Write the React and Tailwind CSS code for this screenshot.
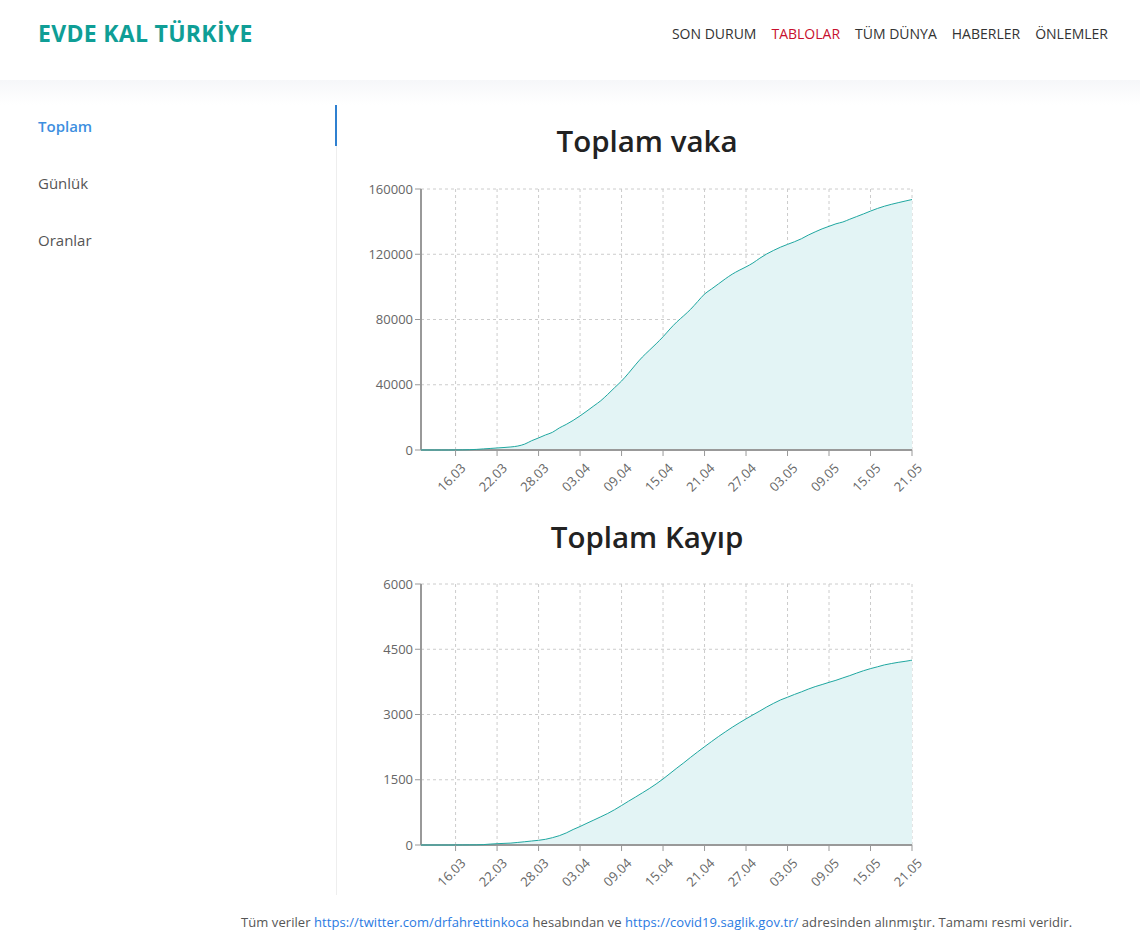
import React from 'react';

const FONT = { fontFamily: '"Open Sans", "Noto Sans", sans-serif' };

// cumulative values, one per day, ending at 21.05 (72 days from 11.03)
const CASES = [1, 5, 5, 6, 18, 47, 98, 191, 359, 670, 947, 1236, 1529, 1872, 2433, 3629, 5698, 7402, 9217, 10827, 13531, 15679, 18135, 20921, 23934, 27069, 30217, 34109, 38226, 42282, 47029, 52167, 56956, 61049, 65111, 69392, 74193, 78546, 82329, 86306, 90980, 95591, 98674, 101790, 104912, 107773, 110130, 112261, 114653, 117589, 120204, 122392, 124375, 126045, 127659, 129491, 131744, 133721, 135569, 137115, 138657, 139771, 141475, 143114, 144749, 146457, 148067, 149435, 150593, 151615, 152587, 153548];
const DEATHS = [0, 0, 0, 0, 0, 1, 2, 3, 4, 9, 21, 30, 37, 44, 59, 75, 92, 108, 131, 168, 214, 277, 356, 425, 501, 574, 649, 725, 812, 908, 1006, 1101, 1198, 1296, 1403, 1518, 1643, 1769, 1890, 2017, 2140, 2259, 2376, 2491, 2600, 2706, 2805, 2900, 2992, 3081, 3174, 3258, 3336, 3397, 3461, 3520, 3584, 3641, 3689, 3739, 3786, 3841, 3894, 3952, 4007, 4055, 4096, 4140, 4171, 4199, 4222, 4249];

const X_LABELS = ['16.03', '22.03', '28.03', '03.04', '09.04', '15.04', '21.04', '27.04', '03.05', '09.05', '15.05', '21.05'];
const DAYS = 72;

const L = 74, R = 565, T = 14, B = 275;

const smoothPath = (pts) => {
  let d = `M${pts[0][0]},${pts[0][1]}`;
  for (let i = 0; i < pts.length - 1; i++) {
    const p0 = pts[i - 1] || pts[i];
    const p1 = pts[i];
    const p2 = pts[i + 1];
    const p3 = pts[i + 2] || p2;
    const c1x = p1[0] + (p2[0] - p0[0]) / 6;
    const c1y = Math.min(B, p1[1] + (p2[1] - p0[1]) / 6);
    const c2x = p2[0] - (p3[0] - p1[0]) / 6;
    const c2y = Math.min(B, p2[1] - (p3[1] - p1[1]) / 6);
    d += ` C${c1x.toFixed(2)},${c1y.toFixed(2)} ${c2x.toFixed(2)},${c2y.toFixed(2)} ${p2[0].toFixed(2)},${p2[1].toFixed(2)}`;
  }
  return d;
};

const AreaChart = ({ data, max, ticks }) => {
  const vals = [...Array(Math.max(0, DAYS - data.length)).fill(0), ...data].slice(-DAYS);
  const n = vals.length;
  const px = (i) => L + (i / (n - 1)) * (R - L);
  const pts = vals.map((v, i) => [px(i), B - (v / max) * (B - T)]);
  const line = smoothPath(pts);
  const area = `${line} L${R},${B} L${L},${B} Z`;
  const xTicks = X_LABELS.map((lab, i) => ({ lab, x: px(5 + i * 6) }));
  return (
    <svg width="600" height="325" className="block" style={FONT}>
      {/* grid */}
      {ticks.map((t) => {
        const y = B - (t / max) * (B - T);
        return <line key={t} x1={L} x2={R} y1={y} y2={y} stroke="#ccc" strokeDasharray="3 3" />;
      })}
      {xTicks.map(({ x, lab }) => (
        <line key={lab} x1={x} x2={x} y1={T} y2={B} stroke="#ccc" strokeDasharray="3 3" />
      ))}
      <path d={area} fill="#e3f4f5" />
      {/* axes */}
      <line x1={L} x2={L} y1={T} y2={B} stroke="#999" strokeWidth="2" />
      <line x1={L} x2={R} y1={B} y2={B} stroke="#999" strokeWidth="2" />
      <path d={line} fill="none" stroke="#1fa7a0" strokeWidth="1" />
      {ticks.map((t) => {
        const y = B - (t / max) * (B - T);
        return (
          <g key={t}>
            <line x1={L - 6} x2={L} y1={y} y2={y} stroke="#999" />
            <text x={L - 8} y={y + 4.5} textAnchor="end" fontSize="13" fill="#666">{t}</text>
          </g>
        );
      })}
      {xTicks.map(({ x, lab }) => (
        <g key={lab}>
          <line x1={x} x2={x} y1={B} y2={B + 6} stroke="#999" />
          <text x={x + 11} y={B + 19} textAnchor="end" fontSize="13" fill="#666" transform={`rotate(-45 ${x + 11} ${B + 19})`}>{lab}</text>
        </g>
      ))}
    </svg>
  );
};

const NAV = ['SON DURUM', 'TABLOLAR', 'TÜM DÜNYA', 'HABERLER', 'ÖNLEMLER'];

export default function App() {
  return (
    <div className="w-[1140px] min-h-[947px] bg-white" style={FONT}>
      {/* Header */}
      <header className="h-[80px] flex items-start justify-between pt-[17px] pl-[38px] pr-[32px]">
        <h1 className="text-[23px] leading-[32px] font-bold text-[#0f9e96] tracking-[0.3px]">EVDE KAL TÜRKİYE</h1>
        <nav className="flex items-center gap-[15px] h-[32px] text-[14px] text-[#333]">
          {NAV.map((n) => (
            <span key={n} className={n === 'TABLOLAR' ? 'text-[#c8102e]' : ''}>{n}</span>
          ))}
        </nav>
      </header>
      <div className="h-[25px] bg-gradient-to-b from-[#f6f7f9] to-white" />

      <div className="flex">
        {/* Sidebar */}
        <aside className="w-[337px] border-r border-[#eee] h-[790px]">
          {['Toplam', 'Günlük', 'Oranlar'].map((item, i) => (
            <div
              key={item}
              className={`h-[41px] mb-[16px] flex items-center pl-[38px] pt-[1px] text-[15px] ${
                i === 0 ? 'font-semibold text-[#3d8fe0] border-r-2 border-[#2f80d0] -mr-px' : 'text-[#555]'
              }`}
            >
              {item}
            </div>
          ))}
        </aside>

        {/* Charts */}
        <main className="w-[620px] flex flex-col items-center pt-[16px]">
          <h2 className="text-[29.5px] leading-[40px] font-semibold text-[#222]">Toplam vaka</h2>
          <div className="mt-[14px]">
            <AreaChart data={CASES} max={160000} ticks={[0, 40000, 80000, 120000, 160000]} />
          </div>
          <h2 className="mt-[17px] text-[29.5px] leading-[40px] font-semibold text-[#222]">Toplam Kayıp</h2>
          <div className="mt-[13px]">
            <AreaChart data={DEATHS} max={6000} ticks={[0, 1500, 3000, 4500, 6000]} />
          </div>
        </main>
      </div>

      <footer className="pt-[17px] pl-[241px] text-[13px] leading-[20px] tracking-[0.07px] text-[#555]">
        Tüm veriler <a className="text-[#2a7ae2]">https://twitter.com/drfahrettinkoca</a> hesabından ve{' '}
        <a className="text-[#2a7ae2]">https://covid19.saglik.gov.tr/</a> adresinden alınmıştır. Tamamı resmi veridir.
      </footer>
    </div>
  );
}
